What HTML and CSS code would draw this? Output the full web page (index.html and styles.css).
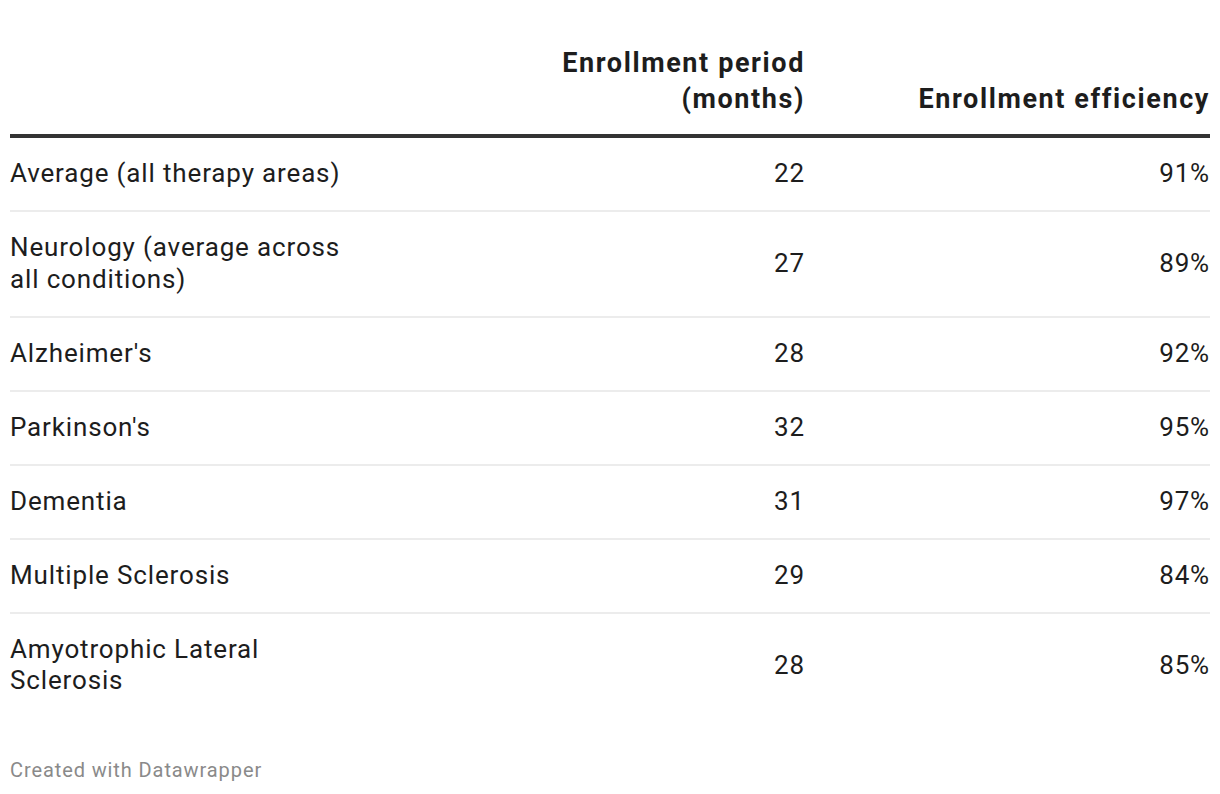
FILE: index.html
```html
<!DOCTYPE html>
<html lang="en">
<head>
<meta charset="utf-8">
<title>Enrollment table</title>
<link rel="stylesheet" href="styles.css">
</head>
<body>
<div class="chart">
  <div class="table">
    <div class="row head">
      <div class="cell label"></div>
      <div class="cell num"><span class="wrap">Enrollment period (months)</span></div>
      <div class="cell num">Enrollment efficiency</div>
    </div>
    <div class="row">
      <div class="cell label">Average (all therapy areas)</div>
      <div class="cell num">22</div>
      <div class="cell num">91%</div>
    </div>
    <div class="row">
      <div class="cell label">Neurology (average across all conditions)</div>
      <div class="cell num">27</div>
      <div class="cell num">89%</div>
    </div>
    <div class="row">
      <div class="cell label">Alzheimer's</div>
      <div class="cell num">28</div>
      <div class="cell num">92%</div>
    </div>
    <div class="row">
      <div class="cell label">Parkinson's</div>
      <div class="cell num">32</div>
      <div class="cell num">95%</div>
    </div>
    <div class="row">
      <div class="cell label">Dementia</div>
      <div class="cell num">31</div>
      <div class="cell num">97%</div>
    </div>
    <div class="row">
      <div class="cell label">Multiple Sclerosis</div>
      <div class="cell num">29</div>
      <div class="cell num">84%</div>
    </div>
    <div class="row last">
      <div class="cell label">Amyotrophic Lateral Sclerosis</div>
      <div class="cell num">28</div>
      <div class="cell num">85%</div>
    </div>
  </div>
  <div class="footer">Created with Datawrapper</div>
</div>
</body>
</html>
```

FILE: styles.css
```css
html, body {
  margin: 0;
  padding: 0;
  background: #ffffff;
}
body {
  font-family: Roboto, "Liberation Sans", sans-serif;
  color: #1d1d1d;
}
.chart {
  padding: 45px 10px 0 10px;
}
.table {
  display: flex;
  flex-direction: column;
  font-size: 26px;
  line-height: 31.5px;
  letter-spacing: 0.85px;
}
.row {
  display: grid;
  grid-template-columns: 360px 1fr 405px;
  align-items: center;
  border-bottom: 2px solid #ececec;
}
.row.head {
  align-items: end;
  font-weight: 700;
  font-size: 27px;
  line-height: 36px;
  letter-spacing: 1.6px;
  border-bottom: 4px solid #333333;
}
.row.last {
  border-bottom: none;
}
.cell {
  padding: 20.25px 0;
}
.row.head .cell {
  padding: 0 0 17px 0;
}
.num {
  text-align: right;
}
.wrap {
  display: block;
  max-width: 260px;
  margin-left: auto;
}
.footer {
  margin-top: 41px;
  font-size: 20px;
  line-height: 24px;
  letter-spacing: 0.9px;
  color: #8a8a8a;
}
```
